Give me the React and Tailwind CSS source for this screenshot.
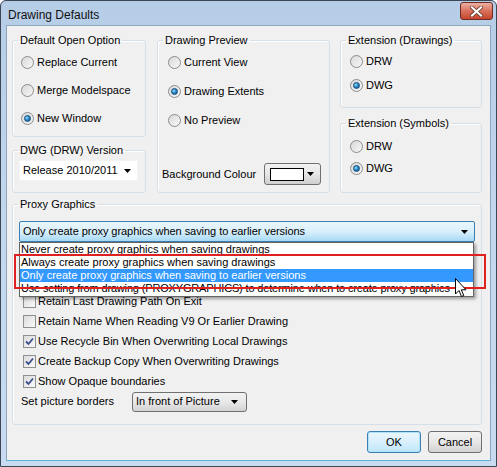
import React from 'react';

const Radio = ({ checked, label }) => (
    <div className="flex items-center gap-[3px]">
        <span className="w-[13px] h-[13px] rounded-full border border-[#8c8c8c] bg-gradient-to-br from-[#d9d9d9] to-[#f7f7f7] flex items-center justify-center shrink-0">
            {checked && (
                <span className="w-[7px] h-[7px] rounded-full bg-[radial-gradient(circle_at_35%_35%,#9fe0ff_0%,#2a8ac9_45%,#0d4f86_100%)] border border-[#0f4d7d]"></span>
            )}
        </span>
        <span>{label}</span>
    </div>
);

const Checkbox = ({ checked, label }) => (
    <div className="h-[20px] flex items-center gap-[1px] pl-[10px]">
        <span className="w-[13px] h-[13px] border border-[#8e8f8f] bg-gradient-to-br from-[#dcdcdc] to-[#fafafa] flex items-center justify-center shrink-0">
            {checked && (
                <svg width="9" height="9" viewBox="0 0 9 9">
                    <path d="M1 4.5 L3.5 7 L8 1.5" fill="none" stroke="#3b4f8f" strokeWidth="1.8" />
                </svg>
            )}
        </span>
        <span className="pl-[1px]">{label}</span>
    </div>
);

const Arrow = () => (
    <svg width="7" height="4" viewBox="0 0 7 4" className="shrink-0">
        <path d="M0 0 H7 L3.5 4 Z" fill="#000" />
    </svg>
);

const Group = ({ title, className, children }) => (
    <fieldset className={`border border-[#d5dfe5] rounded-[3px] shadow-[inset_1px_1px_0_#fff] ${className}`}>
        <legend className="ml-[5px] px-[2px] leading-[14px]">{title}</legend>
        {children}
    </fieldset>
);

const proxyOptions = [
    'Never create proxy graphics when saving drawings',
    'Always create proxy graphics when saving drawings',
    'Only create proxy graphics when saving to earlier versions',
    'Use setting from drawing (PROXYGRAPHICS) to determine when to create proxy graphics',
];

export default function App() {
    return (
        <div className="w-[497px] h-[467px] font-['Liberation_Sans',Arial,sans-serif] text-[11px] text-black bg-white">
            <div className="w-full h-full flex flex-col border border-[#3c4654] rounded-t-[6px] bg-gradient-to-b from-[#b6cde7] via-[#c3d7ee] to-[#c8dbf0] px-[5px] pb-[5px]">

                {/* Title bar */}
                <div className="h-[24px] flex items-start justify-between">
                    <span className="pl-[2px] pt-[7px] text-[12px] leading-[14px] text-[#111]">Drawing Defaults</span>
                    <div className="mt-[1px] -mr-[2px] w-[33px] h-[18px] rounded-[3px] border border-[#6d2b23] bg-gradient-to-b from-[#eab0a3] via-[#d8705b] to-[#c5452d] flex items-center justify-center">
                        <svg width="13" height="11" viewBox="0 0 13 11">
                            <path d="M2 1.5 L11 9.5 M11 1.5 L2 9.5" stroke="#5a2a22" strokeWidth="3.6" strokeLinecap="square" />
                            <path d="M2 1.5 L11 9.5 M11 1.5 L2 9.5" stroke="#fff" strokeWidth="2.2" strokeLinecap="square" />
                        </svg>
                    </div>
                </div>

                {/* Client area */}
                <div className="flex-1 border border-[#8da5c0] border-b-[#5fb4d6] bg-[#f0f0f0] flex flex-col">

                    {/* Top groups */}
                    <div className="flex pt-[7px] pl-[5px]">
                        <div className="w-[134px] flex flex-col">
                            <Group title="Default Open Option" className="h-[104px]">
                                <div className="flex flex-col pl-[8px] pt-[1px]">
                                    <div className="h-[28px] flex items-center"><Radio label="Replace Current" /></div>
                                    <div className="h-[28px] flex items-center"><Radio label="Merge Modelspace" /></div>
                                    <div className="h-[28px] flex items-center"><Radio checked label="New Window" /></div>
                                </div>
                            </Group>
                            <Group title="DWG (DRW) Version" className="h-[50px] mt-[6px]">
                                <div className="pl-[6px] pt-[3px]">
                                    <div className="w-[119px] h-[21px] bg-white border border-[#f4f4f4] flex items-center justify-between pl-[3px] pr-[6px]">
                                        <span>Release 2010/2011</span>
                                        <Arrow />
                                    </div>
                                </div>
                            </Group>
                        </div>

                        <div className="w-[173px] ml-[11px]">
                            <Group title="Drawing Preview" className="h-[160px]">
                                <div className="flex flex-col pl-[10px] pt-[1px]">
                                    <div className="h-[29px] flex items-center"><Radio label="Current View" /></div>
                                    <div className="h-[29px] flex items-center"><Radio checked label="Drawing Extents" /></div>
                                    <div className="h-[29px] flex items-center"><Radio label="No Preview" /></div>
                                </div>
                                <div className="flex items-center mt-[28px] pl-[4px]">
                                    <span className="w-[102px]">Background Colour</span>
                                    <div className="w-[57px] h-[22px] rounded-[3px] border border-[#707070] bg-gradient-to-b from-[#f2f2f2] via-[#e6e6e6] to-[#cfcfcf] flex items-center pl-[5px] pr-[6px] justify-between">
                                        <span className="w-[34px] h-[13px] bg-white border border-black"></span>
                                        <Arrow />
                                    </div>
                                </div>
                            </Group>
                        </div>

                        <div className="w-[142px] ml-[10px] flex flex-col">
                            <Group title="Extension (Drawings)" className="h-[75px]">
                                <div className="flex flex-col pl-[9px] pt-[2px]">
                                    <div className="h-[24px] flex items-center"><Radio label="DRW" /></div>
                                    <div className="h-[24px] flex items-center"><Radio checked label="DWG" /></div>
                                </div>
                            </Group>
                            <Group title="Extension (Symbols)" className="h-[77px] mt-[8px]">
                                <div className="flex flex-col pl-[9px] pt-[5px]">
                                    <div className="h-[22px] flex items-center"><Radio label="DRW" /></div>
                                    <div className="h-[22px] flex items-center"><Radio checked label="DWG" /></div>
                                </div>
                            </Group>
                        </div>
                    </div>

                    {/* Proxy graphics */}
                    <div className="pl-[5px] mt-[4px]">
                        <Group title="Proxy Graphics" className="w-[470px] h-[228px] relative">
                            <div className="px-[6px] pt-[10px] relative">
                                <div className="h-[21px] rounded-[2px] border border-[#3c7fb1] bg-gradient-to-b from-[#eaf6fd] via-[#d9f0fc] to-[#a7d9f5] flex items-center justify-between pl-[3px] pr-[6px]">
                                    <span className="tracking-[-0.05px]">Only create proxy graphics when saving to earlier versions</span>
                                    <Arrow />
                                </div>

                                {/* Open dropdown list */}
                                <div className="absolute left-[6px] top-[31px] w-[455px] h-[55px] bg-white border border-[#646464] shadow-[2px_2px_3px_rgba(0,0,0,0.35)] z-10 flex flex-col overflow-hidden">
                                    {proxyOptions.map((opt, i) => (
                                        <div
                                            key={opt}
                                            className={`h-[13px] leading-[13px] pl-[1px] whitespace-nowrap ${i === 2 ? 'bg-[#3399ff] text-white' : ''} ${i === 3 ? 'tracking-[-0.16px]' : ''}`}
                                        >
                                            {opt}
                                        </div>
                                    ))}
                                </div>

                                {/* Red highlight box */}
                                <div className="absolute left-[1px] top-[43px] w-[472px] h-[35px] border-2 border-[#e0201f] z-20"></div>

                                {/* Mouse cursor */}
                                <svg className="absolute left-[442px] top-[67px] z-30" width="12" height="20" viewBox="0 0 12 20">
                                    <path d="M0.5 0.5 L0.5 16 L4 12.5 L6.5 18.5 L8.8 17.5 L6.3 11.8 L11 11.8 Z" fill="#fff" stroke="#000" strokeWidth="1" strokeLinejoin="miter" />
                                </svg>
                            </div>

                            <div className="flex flex-col mt-[49px]">
                                <Checkbox label="Retain Last Drawing Path On Exit" />
                                <Checkbox label="Retain Name When Reading V9 Or Earlier Drawing" />
                                <Checkbox checked label="Use Recycle Bin When Overwriting Local Drawings" />
                                <Checkbox checked label="Create Backup Copy When Overwriting Drawings" />
                                <Checkbox checked label="Show Opaque boundaries" />
                                <div className="h-[21px] flex items-center pl-[8px]">
                                    <span className="w-[111px]">Set picture borders</span>
                                    <div className="w-[115px] h-[20px] rounded-[3px] border border-[#707070] bg-gradient-to-b from-[#f2f2f2] via-[#e8e8e8] to-[#d3d3d3] flex items-center justify-between pl-[3px] pr-[8px]">
                                        <span>In front of Picture</span>
                                        <Arrow />
                                    </div>
                                </div>
                            </div>
                        </Group>
                    </div>

                    {/* Buttons */}
                    <div className="flex justify-end gap-[7px] pr-[8px] mt-[6px]">
                        <button className="w-[54px] h-[22px] rounded-[3px] border border-[#3c7fb1] bg-gradient-to-b from-[#eaf6fd] via-[#d9f0fc] to-[#bee6fd] shadow-[inset_0_0_0_1px_#aee3fc]">
                            OK
                        </button>
                        <button className="w-[54px] h-[22px] rounded-[3px] border border-[#707070] bg-gradient-to-b from-[#f2f2f2] via-[#e8e8e8] to-[#d2d2d2]">
                            Cancel
                        </button>
                    </div>
                </div>
            </div>
        </div>
    );
}
